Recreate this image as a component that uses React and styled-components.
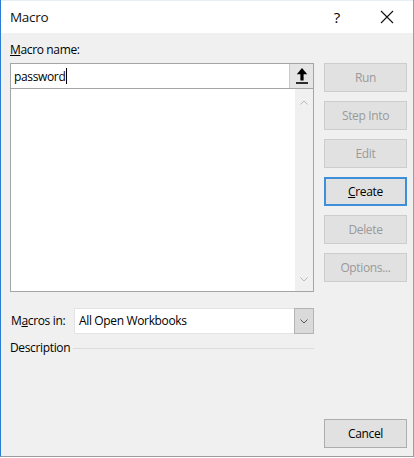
import React from "react";
import styled, { createGlobalStyle } from "styled-components";

const GlobalStyle = createGlobalStyle`
  html, body {
    margin: 0;
    padding: 0;
    background: #ffffff;
  }
  body {
    font-family: "Open Sans", "Noto Sans", sans-serif;
    font-size: 12px;
    color: #000;
  }
`;

const Window = styled.div`
  width: 412px;
  height: 456px;
  border-left: 1px solid #2b7cd3;
  border-right: 1px solid #9c9c9c;
  border-bottom: 1px solid #9c9c9c;
  display: flex;
  flex-direction: column;
  background: #f0f0f0;
`;

const TitleBar = styled.div`
  height: 33px;
  flex-shrink: 0;
  background: #fff;
  display: flex;
  align-items: center;
  padding-left: 9px;
  border-top: 1px solid #e6eef8;
  box-sizing: border-box;
`;

const Title = styled.div`
  flex: 1;
  font-size: 13.5px;
  letter-spacing: -0.3px;
  padding-bottom: 1px;
  color: #111;
`;

const HelpMark = styled.div`
  width: 50px;
  font-size: 15px;
  text-align: center;
  margin-right: 2px;
`;

const CloseBox = styled.div`
  width: 46px;
  height: 33px;
  display: flex;
  align-items: center;
  justify-content: center;
  margin-right: 3px;
`;

const Body = styled.div`
  flex: 1;
  display: flex;
  padding: 10px 6px 8px 9px;
`;

const LeftCol = styled.div`
  width: 304px;
  display: flex;
  flex-direction: column;
`;

const Label = styled.div`
  height: 14px;
  line-height: 14px;
  letter-spacing: -0.35px;
  white-space: nowrap;
`;

const NameBox = styled.div`
  margin-top: 6px;
  border: 1px solid #a5a5a5;
  background: #fff;
  display: flex;
  flex-direction: column;
`;

const InputRow = styled.div`
  height: 24px;
  display: flex;
  border-bottom: 1px solid #a5a5a5;
`;

const InputText = styled.div`
  flex: 1;
  padding-left: 3px;
  line-height: 23px;
  letter-spacing: -0.35px;
  display: flex;
  align-items: center;
`;

const Caret = styled.span`
  display: inline-block;
  width: 1px;
  height: 16px;
  background: #000;
  margin-left: 1px;
`;

const ArrowButton = styled.div`
  width: 23px;
  height: 24px;
  background: #e5e5e5;
  border-left: 1px solid #c8c8c8;
  display: flex;
  align-items: center;
  justify-content: center;
`;

const ListArea = styled.div`
  height: 202px;
  display: flex;
`;

const ListItems = styled.div`
  flex: 1;
`;

const ScrollBar = styled.div`
  width: 18px;
  background: #f0f0f0;
  display: flex;
  flex-direction: column;
  justify-content: space-between;
  align-items: center;
  padding: 11px 0 9px;
`;

const MacrosRow = styled.div`
  margin-top: 16px;
  display: flex;
  align-items: center;
`;

const MacrosLabel = styled(Label)`
  width: 63px;
  padding-left: 1px;
`;

const Select = styled.div`
  width: 240px;
  height: 26px;
  box-sizing: border-box;
  background: #fff;
  border: 1px solid #e3e3e3;
  display: flex;
`;

const SelectText = styled.div`
  flex: 1;
  padding-left: 4px;
  line-height: 24px;
  letter-spacing: -0.35px;
`;

const SelectButton = styled.div`
  width: 18px;
  background: #dadada;
  border: 1px solid #b4b4b4;
  margin: -1px -1px -1px 0;
  display: flex;
  align-items: center;
  justify-content: center;
`;

const GroupHeader = styled.div`
  margin-top: 7px;
  display: flex;
  align-items: center;
  gap: 3px;
`;

const GroupLine = styled.div`
  flex: 1;
  height: 1px;
  background: #dcdcdc;
  margin-top: 1px;
`;

const RightCol = styled.div`
  margin-left: 10px;
  padding-top: 20px;
  width: 84px;
  display: flex;
  flex-direction: column;
  gap: 9px;
`;

const Button = styled.div`
  height: 29px;
  box-sizing: border-box;
  background: #e1e1e1;
  border: 1px solid ${(p) => (p.$default ? "#3c8fd8" : p.$disabled ? "#cdcdcd" : "#adadad")};
  box-shadow: ${(p) => (p.$default ? "inset 0 0 0 1px #3c8fd8" : "none")};
  color: ${(p) => (p.$disabled ? "#9a9a9a" : "#000")};
  display: flex;
  align-items: center;
  justify-content: center;
  letter-spacing: -0.35px;
  margin-top: ${(p) => (p.$bottom ? "auto" : "0")};
`;

function Chevron({ up, color = "#b8b8b8", w = 8 }) {
  return (
    <svg width={w} height={w / 2 + 1} viewBox="0 0 8 5">
      <path
        d={up ? "M0.5 4.5 L4 1 L7.5 4.5" : "M0.5 0.5 L4 4 L7.5 0.5"}
        fill="none"
        stroke={color}
        strokeWidth="1"
      />
    </svg>
  );
}

const buttons = [
  { label: "Run", disabled: true },
  { label: "Step Into", disabled: true },
  { label: "Edit", disabled: true },
  { label: "reate", key: "C", isDefault: true },
  { label: "Delete", disabled: true },
  { label: "Options...", disabled: true },
];

export default function App() {
  return (
    <>
      <GlobalStyle />
      <Window>
        <TitleBar>
          <Title>Macro</Title>
          <HelpMark>?</HelpMark>
          <CloseBox>
            <svg width="14" height="14" viewBox="0 0 14 14">
              <path d="M1 1 L13 13 M13 1 L1 13" stroke="#111" strokeWidth="1.1" />
            </svg>
          </CloseBox>
        </TitleBar>
        <Body>
          <LeftCol>
            <Label>
              <u>M</u>acro name:
            </Label>
            <NameBox>
              <InputRow>
                <InputText>
                  password<Caret />
                </InputText>
                <ArrowButton>
                  <svg width="14" height="18" viewBox="0 0 14 18">
                    <path d="M7 1 L1.8 7.2 L5.4 7.2 L5.4 13.5 L8.6 13.5 L8.6 7.2 L12.2 7.2 Z" fill="#000" />
                    <rect x="1" y="15.2" width="12" height="1.6" fill="#000" />
                  </svg>
                </ArrowButton>
              </InputRow>
              <ListArea>
                <ListItems />
                <ScrollBar>
                  <Chevron up />
                  <Chevron />
                </ScrollBar>
              </ListArea>
            </NameBox>
            <MacrosRow>
              <MacrosLabel>
                M<u>a</u>cros in:
              </MacrosLabel>
              <Select>
                <SelectText>All Open Workbooks</SelectText>
                <SelectButton>
                  <Chevron color="#555" />
                </SelectButton>
              </Select>
            </MacrosRow>
            <GroupHeader>
              <Label>Description</Label>
              <GroupLine />
            </GroupHeader>
          </LeftCol>
          <RightCol>
            {buttons.map((b) => (
              <Button key={b.label} $disabled={b.disabled} $default={b.isDefault}>
                {b.key ? (
                  <>
                    <u>{b.key}</u>
                    {b.label}
                  </>
                ) : (
                  b.label
                )}
              </Button>
            ))}
            <Button $bottom>Cancel</Button>
          </RightCol>
        </Body>
      </Window>
    </>
  );
}
